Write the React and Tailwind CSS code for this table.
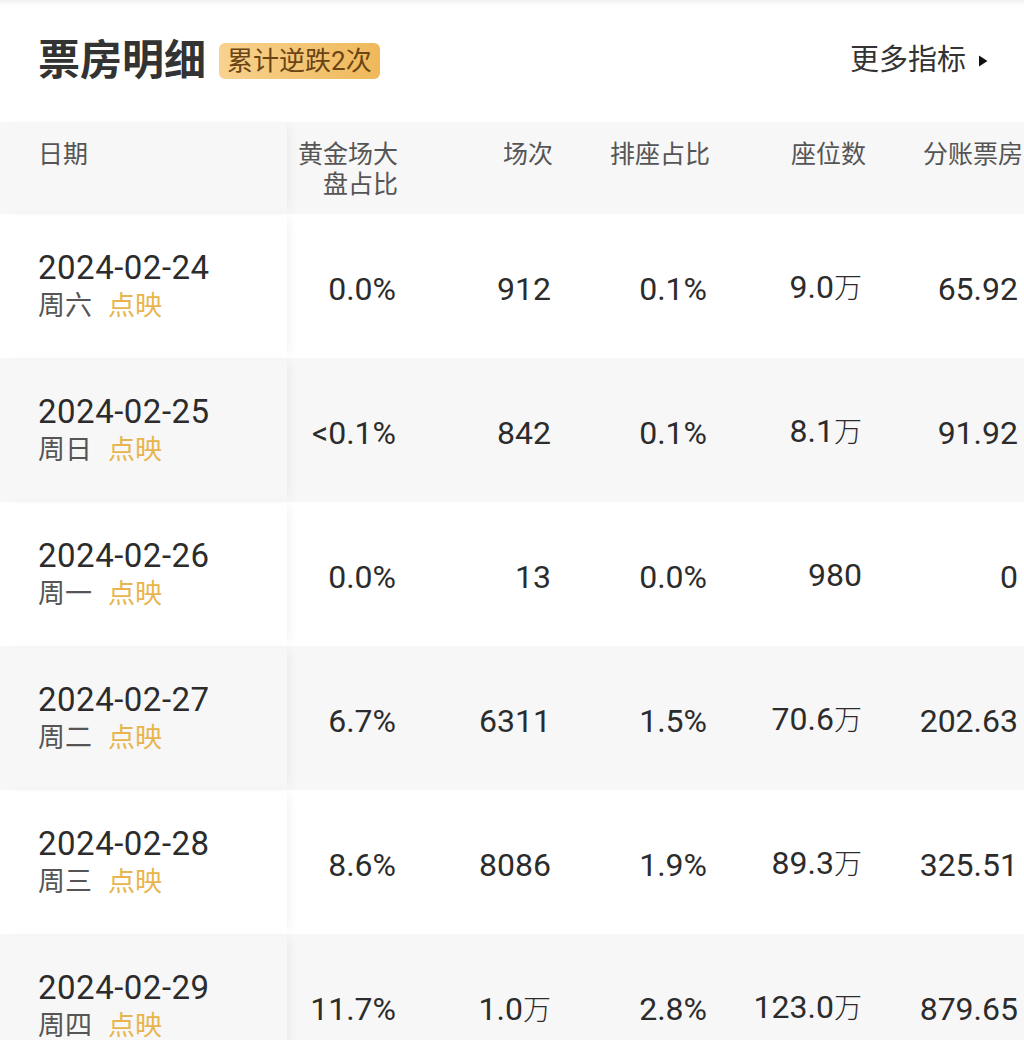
import React from "react";

const rows = [
  { date: "2024-02-24", week: "周六", gold: "0.0%", shows: "912", seat: "0.1%", seats: "9.0", seatsUnit: "万", box: "65.92" },
  { date: "2024-02-25", week: "周日", gold: "<0.1%", shows: "842", seat: "0.1%", seats: "8.1", seatsUnit: "万", box: "91.92" },
  { date: "2024-02-26", week: "周一", gold: "0.0%", shows: "13", seat: "0.0%", seats: "980", seatsUnit: "", box: "0" },
  { date: "2024-02-27", week: "周二", gold: "6.7%", shows: "6311", seat: "1.5%", seats: "70.6", seatsUnit: "万", box: "202.63" },
  { date: "2024-02-28", week: "周三", gold: "8.6%", shows: "8086", seat: "1.9%", seats: "89.3", seatsUnit: "万", box: "325.51" },
  { date: "2024-02-29", week: "周四", gold: "11.7%", shows: "1.0", showsUnit: "万", seat: "2.8%", seats: "123.0", seatsUnit: "万", box: "879.65" },
];

const font = { fontFamily: "Roboto, 'Noto Sans CJK SC', sans-serif" };

const Num = ({ value, unit }) => (
  <span>
    {value}
    {unit && <span className="text-[28px] font-light">{unit}</span>}
  </span>
);

const App = () => {
  return (
    <div className="w-[1024px] h-[1040px] overflow-hidden bg-white text-[#333]" style={font}>
      <div className="h-[6px] bg-gradient-to-b from-[#f1f1f1] to-white"></div>

      {/* header */}
      <div className="flex items-center justify-between h-[116px] pl-[38px] pr-[36px] pb-[6px]">
        <div className="flex items-center gap-[13px]">
          <div className="text-[42px] font-bold text-[#333] leading-none">票房明细</div>
          <div className="h-[36px] px-[8px] flex items-center rounded-[6px] bg-gradient-to-r from-[#f8d28e] to-[#efb95a] text-[26px] text-[#6a4414] leading-none">
            累计逆跌2次
          </div>
        </div>
        <div className="flex items-center gap-[12px] text-[29px] text-[#333]">
          <span>更多指标</span>
          <svg width="10" height="12" viewBox="0 0 10 12">
            <path d="M1 0.5 L9.5 6 L1 11.5 Z" fill="#111" />
          </svg>
        </div>
      </div>

      {/* table header */}
      <div className="flex h-[92px] bg-[#f7f7f7] text-[25px] text-[#555] leading-[30px]">
        <div className="w-[287px] shrink-0 pl-[38px] pt-[18px] relative z-10 shadow-[6px_0_10px_-4px_rgba(0,0,0,0.06)]">日期</div>
        <div className="w-[123px] shrink-0 pr-[12px] pt-[18px] text-right">黄金场大<br />盘占比</div>
        <div className="w-[154px] shrink-0 pr-[11px] pt-[18px] text-right">场次</div>
        <div className="w-[156px] shrink-0 pr-[10px] pt-[18px] text-right">排座占比</div>
        <div className="w-[155px] shrink-0 pr-[9px] pt-[18px] text-right">座位数</div>
        <div className="w-[156px] shrink-0 pr-[8px] pt-[18px] text-right whitespace-nowrap">分账票房</div>
      </div>

      {/* rows */}
      {rows.map((r, i) => (
        <div key={r.date} className={`flex h-[144px] items-center text-[32px] text-[#2c2c2c] ${i % 2 === 1 ? "bg-[#f7f7f7]" : "bg-white"}`}>
          <div className="w-[287px] shrink-0 h-full pl-[38px] flex flex-col justify-center relative z-10 shadow-[6px_0_10px_-4px_rgba(0,0,0,0.06)]">
            <div className="leading-[40px] text-[33px] tracking-[0.5px]">{r.date}</div>
            <div className="leading-[36px] text-[27px] flex gap-[16px]">
              <span className="text-[#555]">{r.week}</span>
              <span className="text-[#e8b54d]">点映</span>
            </div>
          </div>
          <div className="w-[123px] shrink-0 pr-[14px] text-right pt-[6px]">{r.gold}</div>
          <div className="w-[154px] shrink-0 pr-[13px] text-right pt-[6px]"><Num value={r.shows} unit={r.showsUnit} /></div>
          <div className="w-[156px] shrink-0 pr-[13px] text-right pt-[6px]">{r.seat}</div>
          <div className="w-[155px] shrink-0 pr-[13px] text-right pt-[2px]"><Num value={r.seats} unit={r.seatsUnit} /></div>
          <div className="w-[156px] shrink-0 pr-[13px] text-right pt-[6px]">{r.box}</div>
        </div>
      ))}
    </div>
  );
};

export default App;
